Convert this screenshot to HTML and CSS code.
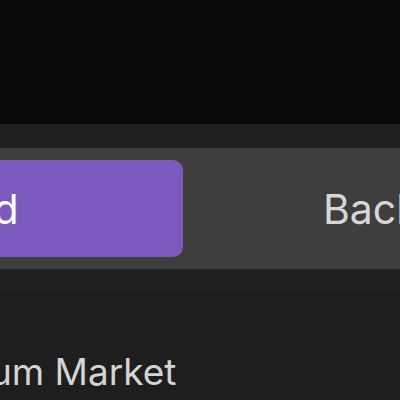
FILE: index.html
```html
<!DOCTYPE html>
<html>
<head>
<meta charset="utf-8">
<link rel="stylesheet" href="styles.css">
</head>
<body>
<div class="page">
  <div class="topbar"></div>
  <div class="header">
    <div class="segmented">
      <div class="seg seg-active">Forward</div>
      <div class="seg">Backward</div>
    </div>
  </div>
  <div class="content">
    <div class="title">Premium Market</div>
  </div>
</div>
</body>
</html>
```
FILE: styles.css
```css
html, body {
  margin: 0;
  padding: 0;
  width: 400px;
  height: 400px;
  overflow: hidden;
  background: #0a0a0a;
  font-family: Inter, "Noto Sans", sans-serif;
}
.page {
  display: flex;
  flex-direction: column;
  height: 400px;
}
.topbar {
  height: 124px;
  background: #0a0a0a;
}
.header {
  background: #202020;
  padding: 24px 0 23px;
  border-bottom: 1px solid #191919;
  overflow: hidden;
}
.segmented {
  display: grid;
  grid-template-columns: 488px 448px;
  gap: 12px;
  width: 972px;
  margin-left: -317px;
  height: 121px;
  box-sizing: border-box;
  padding: 12px;
  background: #3e3e3e;
}
.seg {
  display: flex;
  align-items: center;
  justify-content: center;
  font-size: 41px;
  color: #d6d6d6;
  border-radius: 10px;
}
.seg-active {
  background: #7c5abd;
  color: #ffffff;
}
.content {
  flex: 1;
  background: #1e1e1e;
  overflow: hidden;
}
.title {
  margin-top: 57px;
  margin-left: -110px;
  font-size: 37px;
  color: #d4d4d4;
  white-space: nowrap;
  line-height: 44px;
}
```
